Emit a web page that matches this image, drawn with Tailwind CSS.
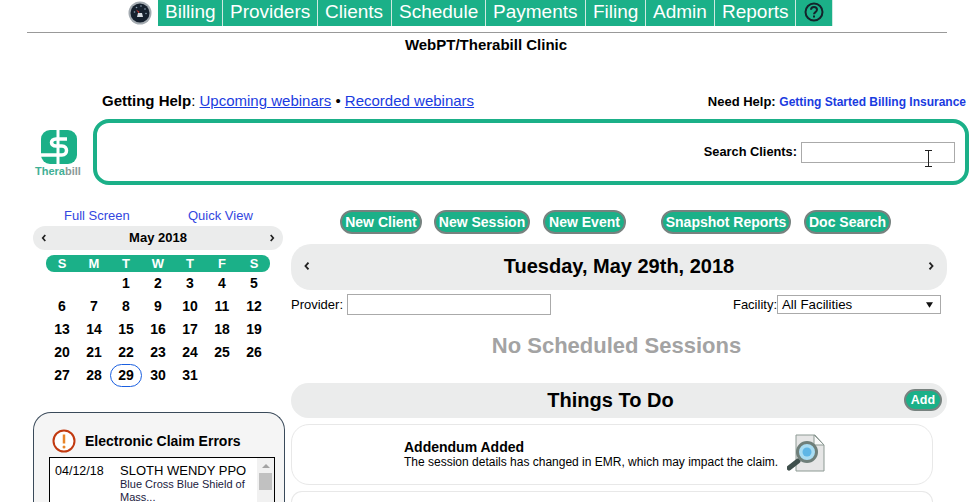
<!doctype html>
<html lang="en">
  <head>
    <meta charset="utf-8" />
    <title>Therabill</title>
    <script src="https://cdn.jsdelivr.net/npm/@tailwindcss/browser@4"></script>
  </head>
  <body class="h-[502px] overflow-hidden bg-white font-['Liberation_Sans',Arial,sans-serif] text-black">
    <!-- Top nav -->
    <nav class="flex h-[26px] pl-[128px]">
      <div class="mr-[6px] h-[26px] w-[24px] pt-[1px]">
        <svg width="24" height="24" viewBox="0 0 24 24">
          <circle cx="12" cy="12" r="11.500" fill="#a4abb1" />
          <circle cx="12" cy="12" r="9.500" fill="#16212e" />
          <circle cx="6.500" cy="11" r=".8" fill="#8fa5b6" />
          <circle cx="8.500" cy="6.500" r=".8" fill="#8fa5b6" />
          <circle cx="13" cy="5" r=".8" fill="#8fa5b6" />
          <circle cx="17" cy="8" r=".8" fill="#8fa5b6" />
          <circle cx="18" cy="12.500" r=".8" fill="#8fa5b6" />
          <path d="M10.500 12L8 8.500l3.500 2.500z" fill="#d8322a" />
          <path d="M10 12h4l1 4h-6z" fill="#d5dce2" />
        </svg>
      </div>
      <div class="flex h-[26px] bg-[#1bb088] text-[19px] leading-[23px] text-white">
        <a class="w-[65px] border-r border-[#cfe9e0] pl-[7px]">Billing</a>
        <a class="w-[95px] border-r border-[#cfe9e0] pl-[7px]">Providers</a>
        <a class="w-[74px] border-r border-[#cfe9e0] pl-[7px]">Clients</a>
        <a class="w-[94px] border-r border-[#cfe9e0] pl-[7px]">Schedule</a>
        <a class="w-[100px] border-r border-[#cfe9e0] pl-[7px]">Payments</a>
        <a class="w-[60px] border-r border-[#cfe9e0] pl-[7px]">Filing</a>
        <a class="w-[69px] border-r border-[#cfe9e0] pl-[7px]">Admin</a>
        <a class="w-[81px] border-r border-[#cfe9e0] pl-[7px]">Reports</a>
        <a class="flex w-[37px] justify-center border-r border-[#cfe9e0] pt-[1px]">
          <svg width="22" height="22" viewBox="0 0 22 22" fill="none">
            <circle cx="11" cy="11" r="8.500" stroke="#14232b" stroke-width="2" />
            <path d="M8 8.800c0-3.800 6-3.800 6 0 0 2.300-3 2.300-3 4.400" stroke="#14232b" stroke-width="2" />
            <rect x="10" y="14.500" width="2" height="2" fill="#14232b" />
          </svg>
        </a>
      </div>
    </nav>

    <div class="mx-[27px] mt-[6px] w-[920px] border-t border-[#999]"></div>
    <div class="mt-[3px] text-center text-[15px] leading-[18px] font-bold">WebPT/Therabill Clinic</div>

    <!-- Help row -->
    <div class="mt-[37px] flex h-[20px] items-center justify-between pr-[6px] pl-[102px]">
      <div class="text-[15px]">
        <b>Getting Help</b>: <a class="text-[#1a3be0] underline">Upcoming webinars</a> &bull;
        <a class="text-[#1a3be0] underline">Recorded webinars</a>
      </div>
      <div class="mt-[2px] text-[13px] font-bold">Need Help: <a class="text-[12px] text-[#1a3be0]">Getting Started Billing Insurance</a></div>
    </div>

    <!-- Search row -->
    <div class="mt-[8px] flex h-[66px] pl-[35px]">
      <div class="flex w-[58px] flex-col pt-[11px]">
        <svg width="36" height="34" viewBox="0 0 36 34" class="ml-[6px]" fill="none">
          <rect width="36" height="34" rx="9" fill="#1bb088" />
          <path d="M26 9H15C9 9 9 16 15 16h6c6 0 6 9 0 9H0" stroke="#fff" stroke-width="3.500" />
          <path d="M17 0v34" stroke="#fff" stroke-width="3" />
        </svg>
        <div class="text-[11px] leading-[14px] font-bold text-[#3fb095]">Thera<span class="text-[#8a9a96]">bill</span></div>
      </div>
      <div class="relative flex h-[66px] w-[876px] items-center justify-end rounded-[16px] border-4 border-[#1bb088] pr-[10px]">
        <label class="mr-[4px] text-[12.800px] font-bold">Search Clients:</label>
        <input class="h-[21px] w-[154px] border border-[#aaa] bg-white" />
        <!-- text cursor over the search box -->
        <svg width="9" height="17" viewBox="0 0 9 17" class="absolute top-[27px] left-[827px]" fill="none" stroke="#222" stroke-width="1">
          <path d="M1 .5h7M4.500 .5v16M1 16.500h7" />
        </svg>
      </div>
    </div>

    <!-- Main columns -->
    <div class="mt-[25px] flex pl-[33px]">
      <!-- Left column -->
      <aside class="mt-[-2px] w-[252px]">
        <div class="flex h-[16px] text-[13px] leading-[16px] text-[#3347e0]">
          <a class="ml-[31px] w-[124px]">Full Screen</a>
          <a>Quick View</a>
        </div>
        <div class="mt-[2px] flex h-[24px] w-[250px] items-center justify-between rounded-[12px] bg-[#ebecec] px-[8px] text-[13px] font-bold">
          <svg width="6" height="8" viewBox="0 0 7 9" fill="none" stroke="#222" stroke-width="2"><path d="M5 1L2 4.500 5 8" /></svg>
          <span>May 2018</span>
          <svg width="6" height="8" viewBox="0 0 7 9" fill="none" stroke="#222" stroke-width="2"><path d="M2 1l3 3.500L2 8" /></svg>
        </div>
        <div class="mt-[5px] ml-[13px] grid h-[17px] w-[224px] grid-cols-7 rounded-[8px] bg-[#1bb088] text-center text-[13px] leading-[17px] font-bold text-white">
          <span>S</span><span>M</span><span>T</span><span>W</span><span>T</span><span>F</span><span>S</span>
        </div>
        <div class="ml-[13px] grid w-[224px] grid-cols-7 text-center text-[14px] leading-[23px] font-bold [&>span]:h-[23px]">
          <span></span><span></span><span>1</span><span>2</span><span>3</span><span>4</span><span>5</span>
          <span>6</span><span>7</span><span>8</span><span>9</span><span>10</span><span>11</span><span>12</span>
          <span>13</span><span>14</span><span>15</span><span>16</span><span>17</span><span>18</span><span>19</span>
          <span>20</span><span>21</span><span>22</span><span>23</span><span>24</span><span>25</span><span>26</span>
          <span>27</span><span>28</span><span class="rounded-[12px] border border-[#1a5fe0] leading-[21px]">29</span><span>30</span><span>31</span>
        </div>

        <div class="mt-[25px] h-[90px] w-[252px] rounded-t-[18px] border border-b-0 border-[#3a4a5a] bg-[#f5f5f5] pt-[16px] pl-[18px]">
          <div class="flex h-[24px] items-center">
            <svg width="24" height="24" viewBox="0 0 24 24" fill="none">
              <circle cx="12" cy="12" r="10.500" fill="#fff" stroke="#c23a10" stroke-width="2" />
              <path d="M12 5.500v9" stroke="#e8862a" stroke-width="2.500" />
              <circle cx="12" cy="18" r="1.500" fill="#e8862a" />
            </svg>
            <span class="ml-[9px] text-[14px] font-bold">Electronic Claim Errors</span>
          </div>
          <div class="mt-[4px] ml-[-3px] flex h-[45px] w-[226px] border border-b-0 border-black bg-white">
            <div class="w-[69px] pt-[5px] pl-[5px] text-[12.500px] leading-[16px]">04/12/18</div>
            <div class="w-[138px] pt-[5px] pl-[1px]">
              <div class="text-[13px] leading-[15px] font-medium">SLOTH WENDY PPO</div>
              <div class="text-[11px] leading-[12.500px] text-[#1a1a40]">Blue Cross Blue Shield of Mass...</div>
            </div>
            <div class="flex w-[17px] flex-col items-center bg-[#f1f1f1] pt-[6px]">
              <div class="h-0 w-0 border-x-[4px] border-b-[4px] border-x-transparent border-b-[#a3a3a3]"></div>
              <div class="mt-[5px] h-[17px] w-[13px] bg-[#c1c1c1]"></div>
            </div>
          </div>
        </div>
      </aside>

      <!-- Right column -->
      <main class="ml-[6px] w-[656px]">
        <div class="flex h-[24px] pl-[49px] text-[14px] leading-[20px] font-bold text-white [&>a]:rounded-full [&>a]:border-2 [&>a]:border-[#77827f] [&>a]:bg-[#1bb088] [&>a]:text-center">
          <a class="w-[82px]">New Client</a>
          <a class="ml-[12px] w-[96px]">New Session</a>
          <a class="ml-[13px] w-[83px]">New Event</a>
          <a class="ml-[35px] w-[130px]">Snapshot Reports</a>
          <a class="ml-[13px] w-[87px]">Doc Search</a>
        </div>

        <div class="mt-[10px] flex h-[46px] items-center justify-between rounded-[20px] bg-[#ebecec] pr-[13px] pb-[2px] pl-[13px] text-[20px] font-bold">
          <svg width="6" height="10" viewBox="0 0 8 12" fill="none" stroke="#222" stroke-width="2.500"><path d="M6 1.500L2 6l4 4.500" /></svg>
          <span>Tuesday, May 29th, 2018</span>
          <svg width="6" height="10" viewBox="0 0 8 12" fill="none" stroke="#222" stroke-width="2.500"><path d="M2 1.500L6 6l-4 4.500" /></svg>
        </div>

        <div class="mt-[4px] flex h-[21px] items-center justify-between pr-[6px] text-[13px]">
          <div class="flex items-center">
            <span class="mr-[4px]">Provider:</span>
            <input class="h-[21px] w-[204px] border border-[#aaa] bg-white" />
          </div>
          <div class="flex items-center">
            <span>Facility:</span>
            <div class="flex h-[19px] w-[164px] items-center justify-between border border-[#aaa] pr-[7px] pl-[4px] text-[13.300px]">
              <span>All Facilities</span>
              <svg width="7" height="6" viewBox="0 0 9 7"><path d="M0 0h9L4.500 7z" fill="#111" /></svg>
            </div>
          </div>
        </div>

        <div class="mt-[18px] h-[26px] pr-[5px] text-center text-[22px] leading-[26px] font-bold text-[#a3a3a3]">No Scheduled Sessions</div>

        <div class="relative mt-[24px] flex h-[35px] items-center justify-center rounded-[18px] bg-[#ebecec] pr-[17px] pb-[2px] text-[20px] font-bold">
          <span>Things To Do</span>
          <a class="absolute top-[6px] right-[5px] h-[22px] w-[38px] rounded-full border-2 border-[#77827f] bg-[#1bb088] text-center text-[12.500px] leading-[18px] font-bold text-white">Add</a>
        </div>

        <div class="mt-[6px] flex h-[61px] w-[642px] rounded-[18px] border border-[#e8e8e8] pt-[14px] pl-[112px]">
          <div class="w-[383px]">
            <div class="text-[14px] leading-[16px] font-bold">Addendum Added</div>
            <div class="text-[12px] leading-[14px]">The session details has changed in EMR, which may impact the claim.</div>
          </div>
          <svg width="38" height="38" viewBox="0 0 38 38" class="mt-[-5px] shrink-0" fill="none">
            <path d="M9 1h19l9 10v26H9z" fill="#e6e6e6" stroke="#8d9a94" />
            <path d="M27 1v10h10z" fill="#fafafa" stroke="#8d9a94" />
            <path d="M11 27L2 34" stroke="#3f4f4c" stroke-width="5" stroke-linecap="round" />
            <circle cx="20" cy="18" r="9.500" fill="#a9dcf2" stroke="#6f7f7a" stroke-width="3" />
            <circle cx="20" cy="18" r="4.500" fill="#5fb6e6" />
          </svg>
        </div>
        <div class="mt-[6px] h-[11px] w-[642px] rounded-t-[18px] border border-b-0 border-[#e8e8e8]"></div>
      </main>
    </div>
  </body>
</html>
